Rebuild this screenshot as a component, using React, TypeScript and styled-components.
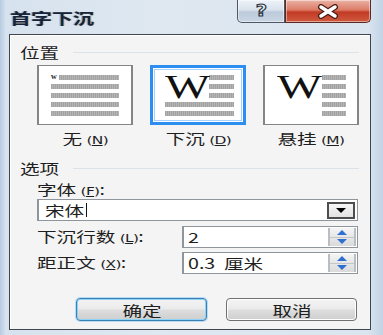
import React from 'react';
import styled, { createGlobalStyle } from 'styled-components';

const GlobalStyle = createGlobalStyle`
  html, body {
    margin: 0;
    padding: 0;
  }
  body {
    width: 383px;
    height: 335px;
    overflow: hidden;
    background: #cddbea;
    font-family: "Noto Sans CJK SC", "DejaVu Sans", sans-serif;
    color: #1e1e1e;
  }
`;

const Window = styled.div`
  width: 383px;
  height: 335px;
  box-sizing: border-box;
  display: flex;
  flex-direction: column;
  background: linear-gradient(to right, #b7cbe1 0px, #d6e2ee 6px, #dfe8f1 40%, #dbe5ef 96%, #c2d3e6 100%);
`;

const TitleBar = styled.div`
  height: 34px;
  display: flex;
  align-items: flex-start;
  flex-shrink: 0;
`;

const TitleText = styled.div`
  padding: 9px 0 0 10px;
  font-size: 15px;
  line-height: 17px;
  font-weight: 600;
  color: #15243a;
  text-shadow: 1px 0 0 rgba(230, 170, 60, 0.45), -1px 0 0 rgba(70, 140, 230, 0.45);
`;

const Stretch = styled.span<{ $origin?: string }>`
  display: inline-block;
  transform: scaleX(1.4);
  transform-origin: ${p => p.$origin || 'left'} center;
  white-space: pre;
`;

const CaptionButtons = styled.div`
  margin-left: auto;
  margin-right: 12px;
  display: flex;
`;

const CaptionButton = styled.div<{ $kind: 'help' | 'close' }>`
  height: 23px;
  width: ${p => (p.$kind === 'help' ? '48px' : '86px')};
  box-sizing: border-box;
  display: flex;
  align-items: center;
  justify-content: center;
  border: 1px solid ${p => (p.$kind === 'help' ? '#4d5866' : '#5b2a22')};
  border-top: none;
  border-radius: ${p => (p.$kind === 'help' ? '0 0 0 5px' : '0 0 5px 0')};
  background: ${p =>
    p.$kind === 'help'
      ? 'linear-gradient(to bottom, #eef3f8 0%, #d9e2ec 45%, #bccadb 55%, #c9d6e4 100%)'
      : 'linear-gradient(to bottom, #eab3a6 0%, #dc7b66 45%, #c23a24 55%, #cf5a3f 100%)'};
  box-shadow: inset 0 0 0 1px rgba(255, 255, 255, 0.45);
`;

const HelpGlyph = styled.span`
  font-family: "DejaVu Sans", sans-serif;
  font-weight: 700;
  font-size: 15px;
  color: #e9eef4;
  -webkit-text-stroke: 1px #2d3440;
  transform: scaleX(1.3);
`;

const Client = styled.div`
  flex: 1;
  margin: 0 12px 5px 9px;
  border: 1px solid #3f4650;
  background: #f4f4f4;
  display: flex;
  flex-direction: column;
  box-shadow: inset 1px 1px 0 #ffffff;
`;

const SectionHeader = styled.div<{ $top: number }>`
  display: flex;
  align-items: center;
  height: 18px;
  margin: ${p => p.$top}px 11px 0 10px;
  font-size: 14px;
  line-height: 18px;
`;

const SectionRule = styled.div`
  flex: 1;
  height: 1px;
  margin-left: 25px;
  background: #dbe3ea;
`;

const PreviewRow = styled.div`
  display: grid;
  grid-template-columns: 96px 96px 96px;
  column-gap: 17px;
  margin: 4px 0 0 27px;
`;

const PreviewOption = styled.div`
  display: flex;
  flex-direction: column;
  align-items: center;
`;

const PreviewBox = styled.div<{ $selected?: boolean }>`
  width: 96px;
  height: 60px;
  box-sizing: border-box;
  background: #ffffff;
  border: ${p => (p.$selected ? '3px solid #2b8ef0' : '1px solid #858585')};
  border-left-width: ${p => (p.$selected ? '3px' : '2px')};
  border-right-width: ${p => (p.$selected ? '3px' : '2px')};
  box-shadow: ${p => (p.$selected ? 'inset 0 0 0 1px #ffffff, inset 0 0 0 2px #a8d2fb' : 'none')};
  padding: ${p => (p.$selected ? '7px 0 0 12px' : '9px 0 0 12px')};
  display: flex;
  flex-direction: column;
  gap: 4px;
`;

const TextLine = styled.div<{ $w?: number }>`
  height: 5px;
  width: ${p => (p.$w ? `${p.$w}px` : '68px')};
  background: repeating-linear-gradient(to right, #a3a3a3 0px, #a3a3a3 1px, #b4b4b4 1px, #b4b4b4 2px);
`;

const LineRow = styled.div`
  display: flex;
  align-items: center;
  height: 5px;
`;

const SmallW = styled.span`
  font-family: "Liberation Serif", serif;
  font-size: 8px;
  line-height: 5px;
  width: 8px;
  font-weight: 700;
  color: #222;
  margin-top: -3px;
`;

const DropBlock = styled.div<{ $hang?: boolean }>`
  display: flex;
  gap: ${p => (p.$hang ? '13px' : '12px')};
`;

const BigW = styled.div`
  width: 32px;
  height: 23px;
  font-family: "Liberation Serif", serif;
  font-size: 34px;
  line-height: 23px;
  color: #111;
  overflow: visible;
`;

const LineStack = styled.div`
  display: flex;
  flex-direction: column;
  gap: 4px;
`;

const OptionLabel = styled.div`
  margin-top: 5px;
  height: 16px;
  font-size: 14px;
  line-height: 16px;
  text-align: center;
`;

const Mnemonic = styled.span`
  font-family: "DejaVu Sans", sans-serif;
  font-size: 11px;
  letter-spacing: -0.5px;
`;

const FieldLabel = styled.div<{ $top?: number }>`
  margin: ${p => p.$top || 0}px 0 0 27px;
  height: 16px;
  font-size: 14px;
  line-height: 16px;
`;

const Combo = styled.div`
  margin: 2px 12px 0 27px;
  height: 22px;
  box-sizing: border-box;
  border: 1px solid #8f959c;
  border-left-width: 2px;
  background: #ffffff;
  display: flex;
  align-items: center;
  padding: 0 2px 0 6px;
`;

const FieldText = styled.div`
  flex: 1;
  display: flex;
  align-items: center;
  font-size: 14px;
  line-height: 18px;
`;

const Caret = styled.span`
  display: block;
  width: 1px;
  height: 14px;
  background: #111;
  margin-left: 13px;
`;

const DropButton = styled.div`
  width: 28px;
  height: 17px;
  box-sizing: border-box;
  border: 2px solid #4d4d4d;
  background: linear-gradient(to bottom, #f6f6f6, #e2e2e2);
  display: flex;
  align-items: center;
  justify-content: center;
`;

const SpinRow = styled.div<{ $top: number }>`
  display: flex;
  align-items: center;
  margin: ${p => p.$top}px 12px 0 27px;
  height: 22px;
`;

const SpinLabel = styled.div`
  width: 145px;
  font-size: 14px;
  line-height: 16px;
`;

const SpinBox = styled.div`
  flex: 1;
  height: 22px;
  box-sizing: border-box;
  border: 1px solid #8f959c;
  border-left-width: 2px;
  background: #ffffff;
  display: flex;
  align-items: center;
  padding: 0 1px 0 4px;
`;

const SpinButtons = styled.div`
  width: 28px;
  height: 18px;
  display: flex;
  flex-direction: column;
  border-left: 2px solid #b9bec4;
  border-right: 2px solid #b9bec4;
  box-sizing: border-box;
`;

const SpinHalf = styled.div<{ $up?: boolean }>`
  flex: 1;
  display: flex;
  align-items: center;
  justify-content: center;
  background: ${p => (p.$up ? 'linear-gradient(#f5f5f5, #e6e6e6)' : 'linear-gradient(#e6e6e6, #dadada)')};
  border-bottom: ${p => (p.$up ? '1px solid #c3c7cc' : 'none')};
`;

const ButtonRow = styled.div`
  display: flex;
  justify-content: flex-end;
  gap: 19px;
  margin: 24px 13px 0 0;
`;

const PushButton = styled.div<{ $default?: boolean }>`
  width: 131px;
  height: 23px;
  box-sizing: border-box;
  border: 1px solid ${p => (p.$default ? '#3c7fb1' : '#707070')};
  border-radius: 4px;
  box-shadow: ${p =>
    p.$default
      ? 'inset 0 0 0 1px #8ed3f7, 0 0 0 1px #b7dcf5'
      : 'inset 0 0 0 1px #ffffff'};
  background: linear-gradient(to bottom, #f3f3f3 0%, #ebebeb 48%, #dddddd 52%, #cfcfcf 100%);
  display: flex;
  align-items: center;
  justify-content: center;
  font-size: 14px;
  line-height: 16px;
`;

const Tri = ({ dir, color }: { dir: 'up' | 'down'; color: string }) => (
  <svg width="10" height="5" viewBox="0 0 10 5">
    {dir === 'down' ? <polygon points="0,0 10,0 5,5" fill={color} /> : <polygon points="0,5 10,5 5,0" fill={color} />}
  </svg>
);

const CloseX = () => (
  <svg width="22" height="15" viewBox="0 0 22 15">
    <path d="M4 3 L18 12 M18 3 L4 12" stroke="#4a1e16" strokeWidth="6" strokeLinecap="round" />
    <path d="M4 3 L18 12 M18 3 L4 12" stroke="#ffffff" strokeWidth="3.5" strokeLinecap="round" />
  </svg>
);

const Lines = ({ n, w }: { n: number; w?: number }) => (
  <>
    {Array.from({ length: n }).map((_, i) => (
      <TextLine key={i} $w={w} />
    ))}
  </>
);

const Label = ({ text, m, center }: { text: string; m: string; center?: boolean }) => (
  <Stretch $origin={center ? 'center' : 'left'}>
    {text} <Mnemonic>(<u>{m}</u>)</Mnemonic>
  </Stretch>
);

export default function App() {
  return (
    <>
      <GlobalStyle />
      <Window>
        <TitleBar>
          <TitleText>
            <Stretch>首字下沉</Stretch>
          </TitleText>
          <CaptionButtons>
            <CaptionButton $kind="help">
              <HelpGlyph>?</HelpGlyph>
            </CaptionButton>
            <CaptionButton $kind="close">
              <CloseX />
            </CaptionButton>
          </CaptionButtons>
        </TitleBar>

        <Client>
          <SectionHeader $top={8}>
            <Stretch>位置</Stretch>
            <SectionRule />
          </SectionHeader>

          <PreviewRow>
            <PreviewOption>
              <PreviewBox>
                <LineRow>
                  <SmallW>w</SmallW>
                  <TextLine $w={60} />
                </LineRow>
                <Lines n={4} />
              </PreviewBox>
              <OptionLabel>
                <Label text="无" m="N" center />
              </OptionLabel>
            </PreviewOption>

            <PreviewOption>
              <PreviewBox $selected>
                <DropBlock>
                  <BigW>
                    <Stretch>W</Stretch>
                  </BigW>
                  <LineStack>
                    <Lines n={3} w={25} />
                  </LineStack>
                </DropBlock>
                <Lines n={2} w={69} />
              </PreviewBox>
              <OptionLabel>
                <Label text="下沉" m="D" center />
              </OptionLabel>
            </PreviewOption>

            <PreviewOption>
              <PreviewBox>
                <DropBlock $hang>
                  <BigW>
                    <Stretch>W</Stretch>
                  </BigW>
                  <LineStack>
                    <Lines n={5} w={24} />
                  </LineStack>
                </DropBlock>
              </PreviewBox>
              <OptionLabel>
                <Label text="悬挂" m="M" center />
              </OptionLabel>
            </PreviewOption>
          </PreviewRow>

          <SectionHeader $top={13}>
            <Stretch>选项</Stretch>
            <SectionRule />
          </SectionHeader>

          <FieldLabel $top={4}>
            <Stretch>
              字体 <Mnemonic>(<u>F</u>)</Mnemonic>:
            </Stretch>
          </FieldLabel>
          <Combo>
            <FieldText>
              <Stretch>宋体</Stretch>
              <Caret />
            </FieldText>
            <DropButton>
              <Tri dir="down" color="#000" />
            </DropButton>
          </Combo>

          <SpinRow $top={5}>
            <SpinLabel>
              <Stretch>
                下沉行数 <Mnemonic>(<u>L</u>)</Mnemonic>:
              </Stretch>
            </SpinLabel>
            <SpinBox>
              <FieldText>
                <Stretch>2</Stretch>
              </FieldText>
              <SpinButtons>
                <SpinHalf $up>
                  <Tri dir="up" color="#2f6fd0" />
                </SpinHalf>
                <SpinHalf>
                  <Tri dir="down" color="#2f6fd0" />
                </SpinHalf>
              </SpinButtons>
            </SpinBox>
          </SpinRow>

          <SpinRow $top={4}>
            <SpinLabel>
              <Stretch>
                距正文 <Mnemonic>(<u>X</u>)</Mnemonic>:
              </Stretch>
            </SpinLabel>
            <SpinBox>
              <FieldText>
                <Stretch>0.3  厘米</Stretch>
              </FieldText>
              <SpinButtons>
                <SpinHalf $up>
                  <Tri dir="up" color="#2f6fd0" />
                </SpinHalf>
                <SpinHalf>
                  <Tri dir="down" color="#2f6fd0" />
                </SpinHalf>
              </SpinButtons>
            </SpinBox>
          </SpinRow>

          <ButtonRow>
            <PushButton $default>
              <Stretch $origin="center">确定</Stretch>
            </PushButton>
            <PushButton>
              <Stretch $origin="center">取消</Stretch>
            </PushButton>
          </ButtonRow>
        </Client>
      </Window>
    </>
  );
}
